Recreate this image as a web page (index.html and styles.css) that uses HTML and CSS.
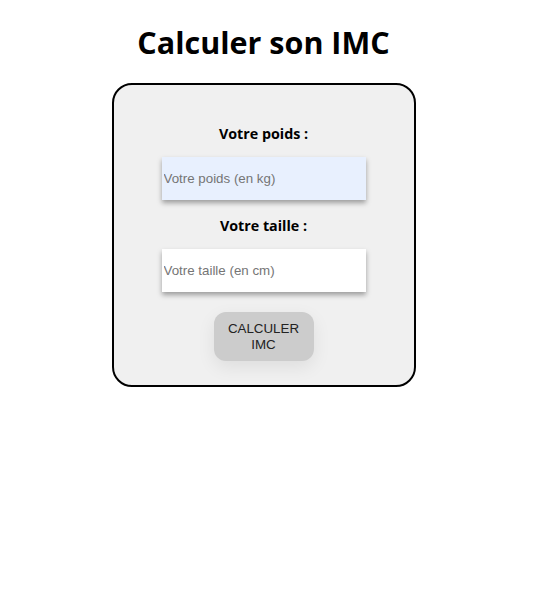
FILE: index.html
```html
<!DOCTYPE html>
<html lang="fr">
<head>
<meta charset="utf-8">
<title>Calculer son IMC</title>
<link rel="stylesheet" href="styles.css">
</head>
<body>
<main class="page">
  <h1 class="title">Calculer son IMC</h1>
  <form class="card">
    <label class="label" for="poids">Votre poids :</label>
    <input class="field field-filled" id="poids" type="text" placeholder="Votre poids (en kg)">
    <label class="label" for="taille">Votre taille :</label>
    <input class="field field-last" id="taille" type="text" placeholder="Votre taille (en cm)">
    <button class="btn" type="button">CALCULER<br>IMC</button>
  </form>
</main>
</body>
</html>
```
FILE: styles.css
```css
html, body {
  margin: 0;
  padding: 0;
  background: #ffffff;
}
.page {
  width: 527px;
  display: flex;
  flex-direction: column;
  align-items: center;
}
.title {
  font-family: "Open Sans", "Noto Sans", sans-serif;
  font-weight: 700;
  font-size: 30.5px;
  line-height: 40px;
  margin: 22px 0 21px;
  color: #000;
}
.card {
  box-sizing: border-box;
  width: 304px;
  height: 304px;
  border: 2px solid #000;
  border-radius: 20px;
  background: #f0f0f0;
  display: flex;
  flex-direction: column;
  align-items: center;
  padding-top: 38px;
}
.label {
  font-family: "Open Sans", "Noto Sans", sans-serif;
  font-weight: 700;
  font-size: 14.3px;
  line-height: 21px;
  color: #000;
}
.field {
  box-sizing: border-box;
  width: 204px;
  height: 43px;
  margin: 13px 0 15px;
  border: none;
  outline: none;
  padding: 0 2px;
  background: #fff;
  font-family: "Liberation Sans", Arial, sans-serif;
  font-size: 13.33px;
  color: #000;
  box-shadow: 0 3px 5px rgba(0, 0, 0, 0.35);
}
.field::placeholder {
  color: #757575;
}
.field-filled {
  background: #e8f0fe;
}
.field-last {
  margin-bottom: 20px;
}
.btn {
  box-sizing: border-box;
  width: 100px;
  height: 49px;
  border: none;
  border-radius: 12px;
  background: #cccccc;
  font-family: "Liberation Sans", Arial, sans-serif;
  font-size: 13.33px;
  line-height: 16px;
  color: #222;
  padding: 0;
  box-shadow: 0 6px 18px rgba(0, 0, 0, 0.08);
}
```
